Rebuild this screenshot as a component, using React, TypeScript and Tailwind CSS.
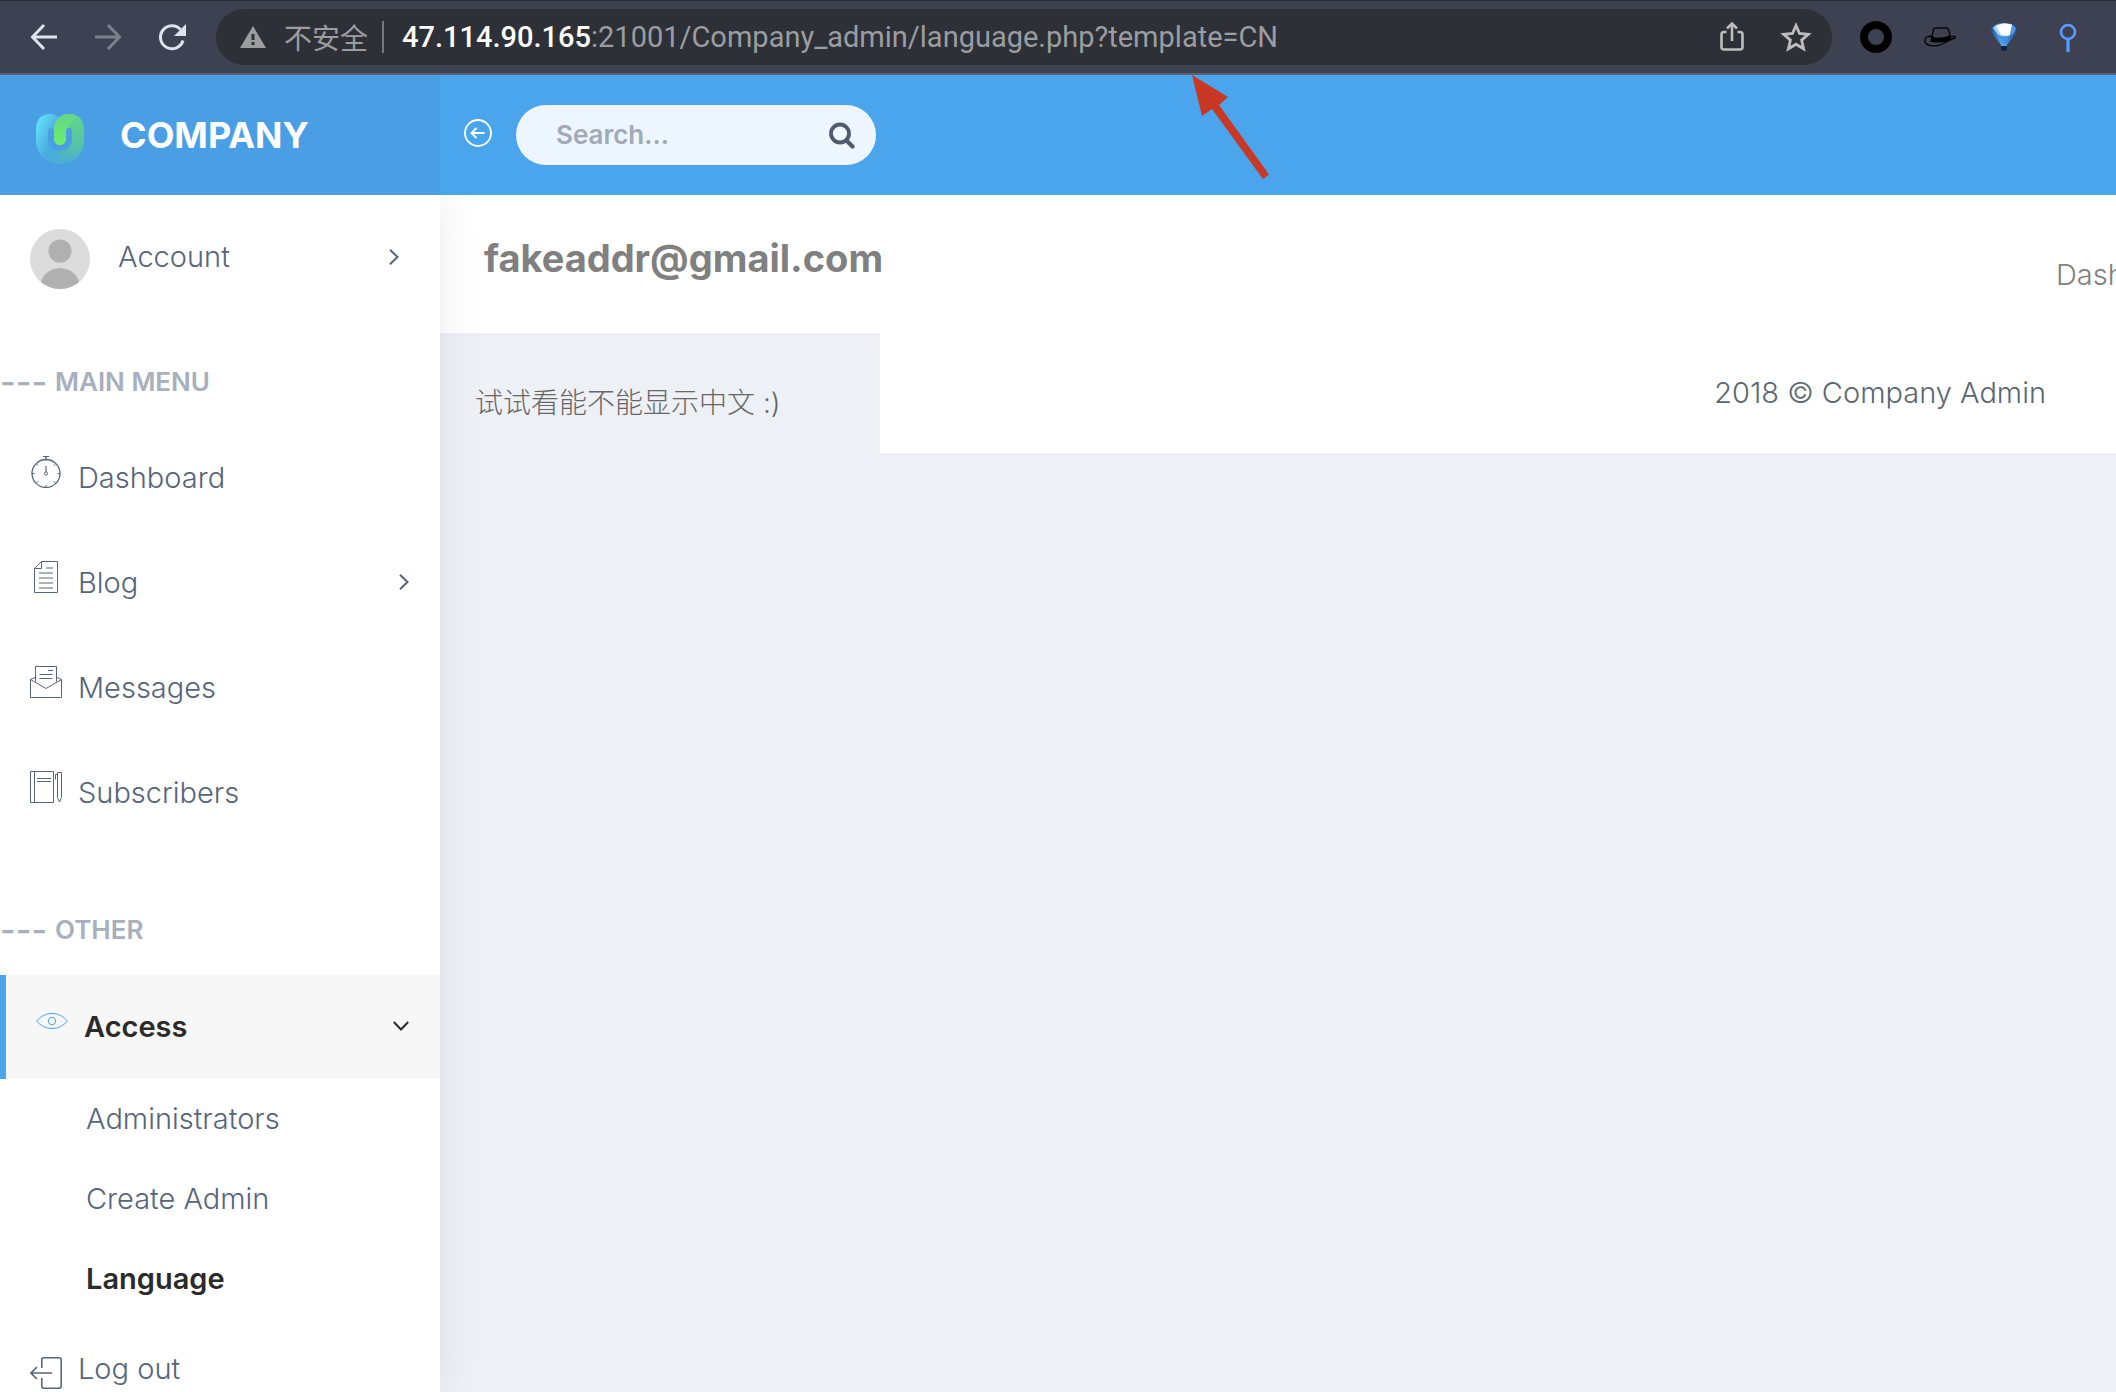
import React from "react";

type IconProps = { className?: string };

const line = { fill: "none", stroke: "currentColor", strokeWidth: 1 };

function StopwatchIcon({ className }: IconProps) {
  return (
    <svg viewBox="0 0 32 32" className={className} {...line}>
      <path d="M13 .5h6" />
      <path d="M16 .5v4" strokeWidth="2" opacity=".7" />
      <circle cx="16" cy="17.5" r="14" strokeWidth="1.3" />
      <circle cx="16" cy="17.5" r="1.6" />
      <path d="M16 16v-6" strokeWidth="2" opacity=".6" />
      <path d="M2 17.5h2.5M27.5 17.5H30M16 29v2.5M6.5 8l1.6 1.6M25.5 8l-1.6 1.6M6.5 27l1.6-1.6M25.5 27l-1.6-1.6" />
    </svg>
  );
}

function DocumentIcon({ className }: IconProps) {
  return (
    <svg viewBox="0 0 32 32" className={className} {...line}>
      <path d="M11.500 .5h16v31h-23v-24z" />
      <path d="M11.500 .5v7h-7" />
      <path d="M16 7h7M9 12h14M9 17h14M9 22h14M9 27h14" strokeWidth="2" opacity=".5" />
    </svg>
  );
}

function EnvelopeIcon({ className }: IconProps) {
  return (
    <svg viewBox="0 0 32 32" className={className} {...line}>
      <path d="M5.500 15.500v-15h21v15" />
      <path d="M5 11.500L.5 13.500v18h31v-18l-4.500-2" />
      <path d="M.5 13.500L16 22.500l15.500-9" />
      <path d="M18 4.500h5M9.500 8.500h13M9.500 12.500h13" />
    </svg>
  );
}

function NotebookIcon({ className }: IconProps) {
  return (
    <svg viewBox="0 0 32 32" className={className} {...line}>
      <path d="M.5 .5h23v31H.5zM4.500 .5v31M7 7.500h14M7 10.500h14" />
      <path d="M27.500 1.500h4v25l-2 4.500-2-4.500zM27.500 3.500h-2v5" />
    </svg>
  );
}

function EyeIcon({ className }: IconProps) {
  return (
    <svg viewBox="0 0 32 32" className={className} {...line}>
      <path d="M.5 16C5 11 10 8.500 16 8.500S27 11 31.500 16C27 21 22 23.500 16 23.500S5 21 .5 16z" />
      <circle cx="16" cy="16" r="3.700" />
    </svg>
  );
}

function ExitIcon({ className }: IconProps) {
  return (
    <svg viewBox="0 0 32 32" className={className} fill="none" stroke="currentColor" strokeWidth="1.6">
      <path d="M11.800 11V2.800Q11.800 .8 13.800 .8H29Q31.200 .8 31.200 2.800V29Q31.200 31.200 29 31.200H13.800Q11.800 31.200 11.800 29V21" />
      <path d="M22 16H1M7 10l-6 6 6 6" />
    </svg>
  );
}

function Chevron({ className }: IconProps) {
  return (
    <svg viewBox="0 0 16 16" className={className} fill="none" stroke="currentColor" strokeWidth="2">
      <path d="M4 .8L11.500 8 4 15.200" />
    </svg>
  );
}

function Logo() {
  return (
    <svg viewBox="0 0 48 50" className="h-[50px] w-12">
      <defs>
        <linearGradient id="logo-body" x1="0" y1="0" x2="1" y2="1">
          <stop offset="0" stopColor="#68ebfb" />
          <stop offset=".6" stopColor="#49abe0" />
          <stop offset="1" stopColor="#4db1d0" />
        </linearGradient>
        <linearGradient id="logo-leaf" x1="0" y1="0" x2="0" y2="1">
          <stop offset="0" stopColor="#62d78c" />
          <stop offset=".6" stopColor="#58c3a4" />
          <stop offset="1" stopColor="#4bacd8" />
        </linearGradient>
        <linearGradient id="logo-stem" x1="0" y1="0" x2="0" y2="1">
          <stop offset="0" stopColor="#63d68c" />
          <stop offset="1" stopColor="#6bee6c" />
        </linearGradient>
      </defs>
      <path d="M0 15C0 5 6 0 14 0c5 0 8 2 10 5v14h-6c0-3-1-5.500-3-5.500s-3 2-3 4.500v7c0 7 5 12 12 12v13C10 50 0 40 0 26z" fill="url(#logo-body)" />
      <path d="M48 15C48 5 41 0 34 0c-5 0-8 2-10 5l6 10 3-1.500c2 0 3 2 3 4.500v7c0 7-5 12-12 12v13c14 0 24-10 24-24z" fill="url(#logo-leaf)" />
      <path d="M34 0C24 0 18 6 18 15v10c0 8 12 8 12 0v-8c0-2.500 1-3.500 3-3.500L40 1.500C38 .5 36 0 34 0z" fill="url(#logo-stem)" />
    </svg>
  );
}

function BrowserBar() {
  return (
    <div className="flex h-[75px] items-center border-t border-b-2 border-t-[#282a34] border-b-[#5c6273] bg-[#3e4151] pr-8 pl-7">
      <div className="flex items-center gap-8 text-[#dfe3f0]">
        <button aria-label="Back" className="size-8">
          <svg viewBox="0 0 32 32" fill="none" stroke="currentColor" strokeWidth="3">
            <path d="M29 16H5M16 4L4.500 16 16 28" />
          </svg>
        </button>
        <button aria-label="Forward" className="size-8 text-[#7b808d]">
          <svg viewBox="0 0 32 32" fill="none" stroke="currentColor" strokeWidth="3">
            <path d="M3 16h24M16 4l11.500 12L16 28" />
          </svg>
        </button>
        <button aria-label="Reload" className="size-8">
          <svg viewBox="0 0 32 32" fill="none" stroke="currentColor" strokeWidth="3">
            <path d="M27 19.500A11.500 11.500 0 1 1 24.500 8.500" />
            <path d="M30 3v12H18z" fill="currentColor" stroke="none" />
          </svg>
        </button>
      </div>
      <div className="ml-7 flex h-14 flex-1 items-center rounded-full bg-[#2e3038] pr-5 pl-6 text-[28px] leading-8 text-[#9b9da1]">
        <svg viewBox="0 0 26 22" className="h-[22px] w-[26px]">
          <path d="M13 0l13 22H0z" fill="#9b9da1" />
          <path d="M11.500 8h3v6h-3zM11.500 16h3v3h-3z" fill="#2e3038" />
        </svg>
        <span className="ml-[18px] font-['Noto_Sans_CJK_SC',sans-serif]">不安全</span>
        <span className="ml-3.5 h-8 w-0.5 bg-[#77797e]" />
        <span className="ml-[18px] flex-1 font-[Roboto,sans-serif] text-[29px] whitespace-nowrap">
          <span className="font-medium text-white">47.114.90.165</span>:21001/Company_admin/language.php?template=CN
        </span>
        <button aria-label="Share" className="size-8 text-[#bdbdbd]">
          <svg viewBox="0 0 32 32" fill="none" stroke="currentColor" strokeWidth="2.600">
            <path d="M10.500 11H8q-2.500 0-2.500 2.500V26q0 2.500 2.500 2.500h16q2.500 0 2.500-2.500V13.500Q26.500 11 24 11h-2.500M16 20V3M11 7.500L16 2.500l5 5" />
          </svg>
        </button>
        <button aria-label="Bookmark" className="ml-8 size-8 text-[#bdbdbd]">
          <svg viewBox="0 0 32 32" fill="none" stroke="currentColor" strokeWidth="2.800">
            <path d="M16 4.500l3.500 8 8.800.8-6.700 5.800 2 8.700L16 23.200l-7.600 4.600 2-8.700-6.700-5.800 8.800-.8z" />
          </svg>
        </button>
      </div>
      <div className="ml-7 flex items-center gap-8">
        <button aria-label="Ring extension" className="size-8">
          <svg viewBox="0 0 32 32">
            <circle cx="16" cy="16" r="12" fill="none" stroke="#000" strokeWidth="8" />
          </svg>
        </button>
        <button aria-label="Hat extension" className="size-8">
          <svg viewBox="0 0 32 32" fill="none" stroke="#000" strokeWidth="1.300">
            <path d="M9 15.500C4 14.500.8 16.500.8 19.500c0 4 5 6 11 5.300C20 24 25.500 18 31 17c1-1.500-1-2.500-5.500-.8" />
            <path d="M7.500 18L9.500 8.500Q9.700 7.300 11 7.200L22.500 7q1.500 0 1.800 1.200L26.500 16" />
            <path d="M8 16.500q9 2.500 17.500-1.500l1.200 3.500Q18 22.500 7 20z" fill="#000" />
          </svg>
        </button>
        <button aria-label="Balloon extension" className="size-8">
          <svg viewBox="0 0 32 32">
            <defs>
              <linearGradient id="balloon" x1="0" y1="0" x2="1" y2="0">
                <stop offset="0" stopColor="#1d5a9c" />
                <stop offset=".45" stopColor="#5aa7f2" />
                <stop offset="1" stopColor="#174b88" />
              </linearGradient>
            </defs>
            <path d="M3 8Q5 2 16 2t13 6q0 3-3 7l-7 9v4q0 2-3 2t-3-2v-4l-7-9Q3 11 3 8z" fill="url(#balloon)" />
            <path d="M5 7Q8 3 16 2.500l8 1-2 11q-5 1.500-10 0L10 14z" fill="#a5d0fb" />
            <path d="M8 4.500L16 2.500q4 0 8 1.200l-2 10.300q-5 1.200-9 0z" fill="#fff" />
            <path d="M24 4q3 1 4 3.500-1 3.500-3.500 6.300L22 14z" fill="#4d97e4" />
            <path d="M12 15.500l4 8.500 5-8.500z" fill="#4591e3" />
            <path d="M13 25h6v3q0 2-3 2t-3-2z" fill="#092646" />
          </svg>
        </button>
        <button aria-label="Pin extension" className="size-8">
          <svg viewBox="0 0 32 32" fill="none" stroke="#5b9bff" strokeWidth="2.600">
            <circle cx="16" cy="11" r="7" />
            <path d="M16 18v13" strokeWidth="3.200" />
          </svg>
        </button>
      </div>
    </div>
  );
}

function Header() {
  return (
    <header className="relative z-10 flex h-[120px] bg-[#4ba5ed]">
      <a href="#home" className="flex w-[440px] items-center gap-9 bg-[#499ee4] pl-9 text-[36px] leading-10 font-bold text-white">
        <span className="pt-2">
          <Logo />
        </span>
        COMPANY
      </a>
      <div className="flex items-center gap-6 pl-6">
        <button aria-label="Collapse menu" className="mb-1 size-7 text-white">
          <svg viewBox="0 0 28 28" fill="none" stroke="currentColor" strokeWidth="1.800">
            <circle cx="14" cy="14" r="13" />
            <path d="M20.500 14h-13M12.500 9l-5 5 5 5" />
          </svg>
        </button>
        <label className="flex h-[60px] w-[360px] items-center rounded-full bg-[#edf5fe] pr-5 pl-10">
          <input
            aria-label="Search"
            placeholder="Search..."
            className="min-w-0 flex-1 bg-transparent text-[26px] leading-8 font-semibold outline-none placeholder:text-[#a2a9b7]"
          />
          <svg viewBox="0 0 28 28" className="size-7 text-[#505a6d]" fill="none" stroke="currentColor">
            <circle cx="12" cy="12.500" r="9" strokeWidth="3.800" />
            <path d="M18.500 19.500l6 6" strokeWidth="4.200" strokeLinecap="round" />
          </svg>
        </label>
      </div>
      <svg viewBox="0 0 78 105" className="absolute top-0 left-[1191px] h-[105px] w-[78px]">
        <path d="M1 0L37 22 28 30 78 99.500 72 104 21 34 11 41z" fill="#c83824" />
      </svg>
    </header>
  );
}

const menu = [
  { label: "Dashboard", Icon: StopwatchIcon, expandable: false },
  { label: "Blog", Icon: DocumentIcon, expandable: true },
  { label: "Messages", Icon: EnvelopeIcon, expandable: false },
  { label: "Subscribers", Icon: NotebookIcon, expandable: false },
];

function SectionLabel({ children }: { children: string }) {
  return (
    <h2 className="flex text-[26px] leading-[42px] font-semibold text-[#a8afbd]">
      <span className="w-[55px] text-[34px] font-medium">---</span>
      {children}
    </h2>
  );
}

function Sidebar() {
  return (
    <nav className="w-[440px] shrink-0 bg-white text-[29px] leading-10 font-light text-[#57657a] shadow-[1px_0_40px_rgba(0,0,0,0.08)]">
      <a href="#account" className="mt-[34px] flex h-[60px] items-center pr-[38px] pl-[30px]">
        <svg viewBox="0 0 60 60" className="size-[60px]">
          <defs>
            <clipPath id="avatar">
              <circle cx="30" cy="30" r="30" />
            </clipPath>
          </defs>
          <g clipPath="url(#avatar)">
            <path d="M0 0h60v60H0z" fill="#dcdcdc" />
            <circle cx="30" cy="22" r="11.500" fill="#b0b0b0" />
            <circle cx="30" cy="59" r="20" fill="#b0b0b0" />
          </g>
        </svg>
        <span className="mb-1 ml-7 flex flex-1 items-center">
          <span className="flex-1">Account</span>
          <Chevron className="size-4" />
        </span>
      </a>
      <div className="mt-[72px]">
        <SectionLabel>MAIN MENU</SectionLabel>
      </div>
      <ul className="mt-[22px] flex flex-col gap-px">
        {menu.map(({ label, Icon, expandable }) => (
          <li key={label}>
            <a href={`#${label}`} className="flex h-[104px] items-center pr-7 pl-[30px]">
              <span className="flex flex-1 items-baseline gap-4">
                <Icon className="size-8" />
                {label}
              </span>
              {expandable && <Chevron className="size-4" />}
            </a>
          </li>
        ))}
      </ul>
      <div className="mt-[65px]">
        <SectionLabel>OTHER</SectionLabel>
      </div>
      <button className="mt-6 flex h-[104px] w-full items-center border-l-6 border-[#4ba5ed] bg-[#f7f7f7] pr-[31px] pb-0.5 pl-[30px] text-left font-semibold text-[#2b2b2b]">
        <span className="flex flex-1 items-baseline gap-4">
          <EyeIcon className="size-8 text-[#4ba5ed]" />
          Access
        </span>
        <Chevron className="size-4 rotate-90" />
      </button>
      <ul className="pl-[86px] leading-[80px]">
        <li>
          <a href="#administrators">Administrators</a>
        </li>
        <li>
          <a href="#create">Create Admin</a>
        </li>
        <li>
          <a href="#language" className="font-semibold text-[#2b2b2b]">
            Language
          </a>
        </li>
      </ul>
      <a href="#logout" className="mt-[30px] flex h-10 items-center gap-4 pl-[30px]">
        <ExitIcon className="mt-2 size-8" />
        Log out
      </a>
    </nav>
  );
}

export default function App() {
  return (
    <div className="flex min-h-screen flex-col overflow-hidden bg-[#edf0f5] font-[Inter,'Noto_Sans_CJK_SC',sans-serif]">
      <BrowserBar />
      <Header />
      <div className="flex flex-1">
        <div className="relative z-1 flex">
          <Sidebar />
        </div>
        <main className="min-w-0 flex-1">
          <div className="flex h-[138px] justify-between bg-white pt-10 pl-11 text-[#808080]">
            <h1 className="text-[38px] leading-[46px] font-bold">fakeaddr@gmail.com</h1>
            <a href="#dashboard" className="mt-5 w-[60px] overflow-hidden text-[29px] leading-10 font-light whitespace-nowrap">
              Dashboard
            </a>
          </div>
          <div className="flex h-[120px]">
            <section className="w-[440px] pt-[50px] pl-[35px] text-[28px] leading-10 font-light text-[#676767]">试试看能不能显示中文 :)</section>
            <footer className="flex flex-1 items-center justify-end bg-white pr-[70px] text-[29px] leading-10 font-light text-[#5b6770]">
              2018 © Company Admin
            </footer>
          </div>
        </main>
      </div>
    </div>
  );
}
